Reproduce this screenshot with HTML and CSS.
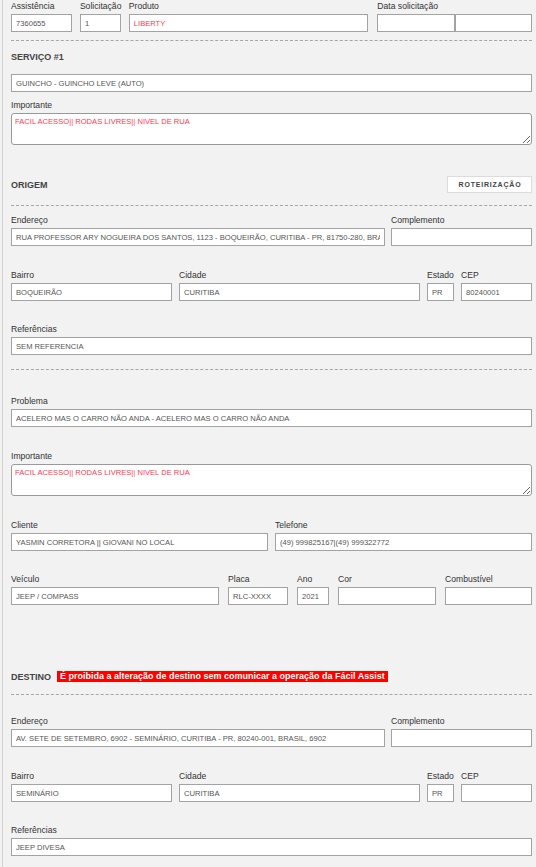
FILE: index.html
```html
<!DOCTYPE html>
<html lang="pt-BR">
<head>
<meta charset="utf-8">
<title>Serviço</title>
<link rel="stylesheet" href="styles.css">
</head>
<body>
<div class="page">
  <div class="row r-top">
    <div class="field f-assist"><label>Assistência</label><input class="inp" value="7360655" readonly></div>
    <div class="field f-solic"><label>Solicitação</label><input class="inp" value="1" readonly></div>
    <div class="field f-prod"><label>Produto</label><input class="inp red" value="LIBERTY" readonly></div>
    <div class="field f-data"><label>Data solicitação</label>
      <div class="pair"><input class="inp d1" value="" readonly><input class="inp d2" value="" readonly></div>
    </div>
  </div>

  <hr class="dash d-top">
  <h3 class="sec-title">SERVIÇO #1</h3>
  <input class="inp full" value="GUINCHO - GUINCHO LEVE (AUTO)" readonly>
  <div class="field imp1"><label>Importante</label><textarea class="ta red" readonly>FACIL ACESSO|| RODAS LIVRES|| NIVEL DE RUA</textarea></div>

  <div class="sec-row origem">
    <h3 class="sec-name">ORIGEM</h3>
    <button class="btn" type="button">ROTEIRIZAÇÃO</button>
  </div>
  <hr class="dash d-origem">

  <div class="row r-end g6 first">
    <div class="field f-end"><label>Endereço</label><input class="inp" value="RUA PROFESSOR ARY NOGUEIRA DOS SANTOS, 1123 - BOQUEIRÃO, CURITIBA - PR, 81750-280, BRASIL, 1123" readonly></div>
    <div class="field f-comp"><label>Complemento</label><input class="inp" value="" readonly></div>
  </div>
  <div class="row g7">
    <div class="field f-bairro"><label>Bairro</label><input class="inp" value="BOQUEIRÃO" readonly></div>
    <div class="field f-cidade"><label>Cidade</label><input class="inp" value="CURITIBA" readonly></div>
    <div class="field f-uf"><label>Estado</label><input class="inp" value="PR" readonly></div>
    <div class="field f-cep"><label>CEP</label><input class="inp" value="80240001" readonly></div>
  </div>
  <div class="row tight">
    <div class="field f-full"><label>Referências</label><input class="inp" value="SEM REFERENCIA" readonly></div>
  </div>
  <hr class="dash d-mid">

  <div class="row r-prob">
    <div class="field f-full"><label>Problema</label><input class="inp" value="ACELERO MAS O CARRO NÃO ANDA - ACELERO MAS O CARRO NÃO ANDA" readonly></div>
  </div>
  <div class="row">
    <div class="field f-full"><label>Importante</label><textarea class="ta red" readonly>FACIL ACESSO|| RODAS LIVRES|| NIVEL DE RUA</textarea></div>
  </div>
  <div class="row g7">
    <div class="field f-half"><label>Cliente</label><input class="inp" value="YASMIN CORRETORA || GIOVANI NO LOCAL" readonly></div>
    <div class="field f-half"><label>Telefone</label><input class="inp" value="(49) 999825167|(49) 999322772" readonly></div>
  </div>
  <div class="row g9 tight">
    <div class="field f-veic"><label>Veículo</label><input class="inp" value="JEEP / COMPASS" readonly></div>
    <div class="field f-placa"><label>Placa</label><input class="inp" value="RLC-XXXX" readonly></div>
    <div class="field f-ano"><label>Ano</label><input class="inp" value="2021" readonly></div>
    <div class="field f-cor"><label>Cor</label><input class="inp" value="" readonly></div>
    <div class="field f-comb"><label>Combustível</label><input class="inp" value="" readonly></div>
  </div>

  <div class="sec-row destino">
    <h3 class="sec-name">DESTINO</h3>
    <span class="alert">É proibida a alteração de destino sem comunicar a operação da Fácil Assist</span>
  </div>
  <hr class="dash d-destino">

  <div class="row r-end g6 first-dest">
    <div class="field f-end"><label>Endereço</label><input class="inp" value="AV. SETE DE SETEMBRO, 6902 - SEMINÁRIO, CURITIBA - PR, 80240-001, BRASIL, 6902" readonly></div>
    <div class="field f-comp"><label>Complemento</label><input class="inp" value="" readonly></div>
  </div>
  <div class="row g7">
    <div class="field f-bairro"><label>Bairro</label><input class="inp" value="SEMINÁRIO" readonly></div>
    <div class="field f-cidade"><label>Cidade</label><input class="inp" value="CURITIBA" readonly></div>
    <div class="field f-uf"><label>Estado</label><input class="inp" value="PR" readonly></div>
    <div class="field f-cep"><label>CEP</label><input class="inp" value="" readonly></div>
  </div>
  <div class="row tight">
    <div class="field f-full"><label>Referências</label><input class="inp" value="JEEP DIVESA" readonly></div>
  </div>
</div>
</body>
</html>
```

FILE: styles.css
```css
html, body {
  margin: 0;
  padding: 0;
  background: #f2f2f2;
}
body {
  font-family: "Liberation Sans", Arial, sans-serif;
  color: #333;
  height: 867px;
  overflow: hidden;
}
.page {
  margin-left: 2px;
  border-left: 1px solid #d2d2d2;
  padding: 0 4px 40px 8px;
  min-height: 900px;
}
.row {
  display: flex;
  gap: 8px;
  margin-top: 23px;
}
.row.tight { margin-top: 22px; }
.row.r-top { margin-top: 0; }
.g6 { gap: 6px; }
.g7 { gap: 7px; }
.g9 { gap: 9px; }
.field {
  display: flex;
  flex-direction: column;
  min-width: 0;
}
.field label {
  display: block;
  font-size: 8.6px;
  line-height: 12px;
  height: 12px;
  margin-bottom: 2px;
  color: #333;
  white-space: nowrap;
}
.inp {
  box-sizing: border-box;
  display: block;
  width: 100%;
  height: 18px;
  margin: 0;
  padding: 0 4px;
  border: 1px solid #a3a3a3;
  border-radius: 0;
  background: #fff;
  font-family: "Liberation Sans", Arial, sans-serif;
  font-size: 7.6px;
  color: #555;
  outline: none;
}
.red { color: #ff3a55; }
.ta {
  box-sizing: border-box;
  display: block;
  width: 100%;
  height: 32px;
  margin: 0;
  padding: 3px 3px;
  border: 1px solid #9a9a9a;
  border-radius: 3px;
  background: #fff;
  font-family: "Liberation Sans", Arial, sans-serif;
  font-size: 7.6px;
  line-height: 10px;
  outline: none;
}
.ta.red { color: #ff3a55; }

.f-assist { width: 61px; }
.f-solic { width: 41px; }
.f-prod { width: 240px; }
.f-data { width: 155px; margin-left: 1px; }
.pair { display: flex; }
.pair .d1 { width: 78px; }
.pair .d2 { width: 77px; }

.f-end { width: 374px; }
.f-comp { width: 141px; }
.f-bairro { width: 161px; }
.f-cidade { width: 241px; }
.f-uf { width: 27px; }
.f-cep { width: 71px; }
.f-full { width: 100%; }
.f-half { width: 257px; }
.f-veic { width: 208px; }
.f-placa { width: 60px; }
.f-ano { width: 32px; }
.f-cor { width: 98px; }
.f-comb { width: 87px; }

.dash {
  border: 0;
  border-top: 1px dashed #a6a6a6;
  height: 0;
  margin: 0;
}
.d-top { margin-top: 8px; }
.d-origem { margin-top: 12px; }
.d-mid { margin-top: 14px; }
.d-destino { margin-top: 11px; }

.sec-title {
  margin: 10px 0 11px;
  font-size: 9px;
  line-height: 12px;
  font-weight: bold;
  color: #444;
}
.full { width: 100%; }
.imp1 { margin-top: 7px; }

.sec-row {
  display: flex;
  align-items: center;
}
.sec-name {
  margin: 0;
  font-size: 9px;
  font-weight: bold;
  color: #444;
  line-height: 12px;
}
.origem {
  margin-top: 31px;
  height: 17px;
  justify-content: space-between;
}
.btn {
  box-sizing: border-box;
  height: 17px;
  width: 85px;
  margin: 0;
  padding: 0 0 0 1px;
  background: #fff;
  border: 1px solid #dcdcdc;
  border-radius: 0;
  font-family: "Liberation Sans", Arial, sans-serif;
  font-size: 7px;
  font-weight: bold;
  letter-spacing: 0.8px;
  color: #444;
}
.r-end.first { margin-top: 8px; }
.r-prob { margin-top: 25px; }
.destino {
  margin-top: 65px;
  height: 13px;
  gap: 6px;
}
.alert {
  background: #ff0000;
  color: #fff;
  font-size: 9px;
  font-weight: bold;
  line-height: 11px;
  height: 11px;
  padding: 0 3px;
  white-space: nowrap;
}
.r-end.first-dest { margin-top: 20px; }
```
